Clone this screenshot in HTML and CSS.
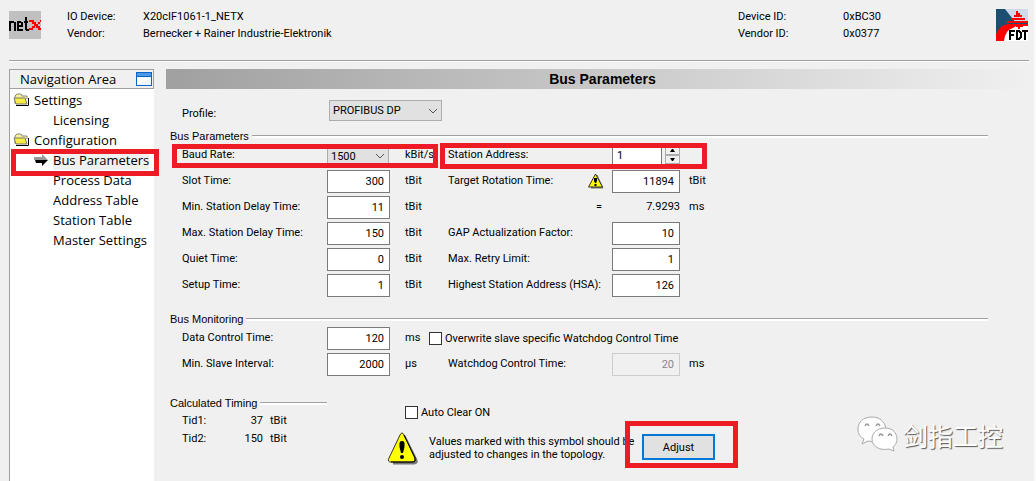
FILE: index.html
```
<!DOCTYPE html>
<html lang="en">
<head>
<meta charset="utf-8">
<title>Bus Parameters</title>
<link rel="stylesheet" href="styles.css">
</head>
<body>
<header class="device">
  <svg class="logo" width="32" height="28" viewBox="0 0 32 28" shape-rendering="crispEdges" role="img" aria-label="netX">
    <rect width="32" height="28" fill="#c0c0c0"/>
    <path d="M1 20V10M1 11H5M6 11V20M14 19H9V10M9 11H12M13 11V15H9M17 6V19M15 11H19M17 19H20" fill="none" stroke="#000" stroke-width="2"/>
    <path d="M20 9H25V11H27V13H29V11H31V9H32V11H31V13H29V15H31V17H32V19H29V17H27V15H26V17H24V19H20V17H23V15H25V13H23V11H20Z" fill="#f00"/>
  </svg>
  <dl class="facts facts-main">
    <dt>IO Device:</dt><dd>X20cIF1061-1_NETX</dd>
    <dt>Vendor:</dt><dd>Bernecker + Rainer Industrie-Elektronik</dd>
  </dl>
  <dl class="facts facts-ids">
    <dt>Device ID:</dt><dd>0xBC30</dd>
    <dt>Vendor ID:</dt><dd>0x0377</dd>
  </dl>
  <svg class="fdt" width="32" height="32" viewBox="0 0 32 32" role="img" aria-label="FDT">
    <rect width="32" height="32" fill="#1b4f72"/>
    <path d="M9 0H32V14H20Z" fill="#d0d8ec"/>
    <path d="M8 32V26L12 20L20 17H32V32Z" fill="#fff"/>
    <path d="M0 32V25Q5 14 14 15L32 15V17H20L17 19Q9 21 8 32Z" fill="#f00"/>
    <path d="M20 2h2v2h2v2h-4zM18 6h8v2h-8zM15 9h14v2H15zM11 12h21v2H11zM20 17h7v1h-3v2h-2v-2h-2z" fill="#f00"/>
    <path d="M14 31V21M13 22H19M14 26H18M21 21V31M20 30H23L25 28V24L23 22H20M26 22H32M29 22V31" fill="none" stroke="#000" stroke-width="2" shape-rendering="crispEdges"/>
  </svg>
</header>
<div class="workspace">
  <nav class="nav">
    <div class="nav-head"><span>Navigation Area</span>
      <svg width="16" height="14" viewBox="0 0 16 14"><rect x=".5" y=".5" width="15" height="13" fill="#eef5fd" stroke="#0a64c8"/><path d="M1 1H15V4H1Z" fill="#4a9ae8"/><path d="M0 4.500H16" stroke="#0a64c8"/><path d="M1 13V6H15Z" fill="#fff"/></svg>
    </div>
    <ul>
      <li class="folder"><svg width="17" height="14" viewBox="0 0 17 14"><path d="M2 11V3L4 1H8L9 3H14V6" fill="#f5ef9b" stroke="#888"/><path d="M1 5H12L14 11H3Z" fill="#f7ec45" stroke="#777"/><path d="M3 12.500H15.500V5" fill="none" stroke="#000"/></svg><a href="#">Settings</a></li>
      <li><a href="#">Licensing</a></li>
      <li class="folder"><svg width="17" height="14" viewBox="0 0 17 14"><path d="M2 11V3L4 1H8L9 3H14V6" fill="#f5ef9b" stroke="#888"/><path d="M1 5H12L14 11H3Z" fill="#f7ec45" stroke="#777"/><path d="M3 12.500H15.500V5" fill="none" stroke="#000"/></svg><a href="#">Configuration</a></li>
      <li class="current"><svg width="14" height="12" viewBox="0 0 14 12"><path d="M0 3H8V0L14 6H0Z" fill="#999"/><path d="M1 6H14L8 12V9H2Z" fill="#000"/></svg><a href="#" aria-current="page">Bus Parameters</a><span class="mark mark-nav"></span></li>
      <li><a href="#">Process Data</a></li>
      <li><a href="#">Address Table</a></li>
      <li><a href="#">Station Table</a></li>
      <li><a href="#">Master Settings</a></li>
    </ul>
  </nav>
  <main class="main">
    <h1>Bus Parameters</h1>
    <div class="profile"><label class="name" for="profile">Profile:</label>
      <span class="combo"><select id="profile"><option>PROFIBUS DP</option></select><svg width="10" height="6" viewBox="0 0 10 6"><path d="M1 1L5 5L9 1" fill="none" stroke="#555"/></svg></span>
    </div>
    <section>
      <h2>Bus Parameters</h2>
      <div class="row">
        <label class="name" for="baud">Baud Rate:</label><span class="combo combo-small"><select id="baud"><option>1500</option></select><svg width="10" height="6" viewBox="0 0 10 6"><path d="M1 1L5 5L9 1" fill="none" stroke="#555"/></svg></span><span class="unit">kBit/s</span>
        <label class="second" for="address">Station Address:</label><input class="value address" id="address" value="1">
        <span class="spin"><button type="button" aria-label="Increase"><svg width="5" height="3" viewBox="0 0 5 3"><path d="M0 3H5L3 0H2Z"/></svg></button><button type="button" aria-label="Decrease"><svg width="5" height="3" viewBox="0 0 5 3"><path d="M0 0H5L3 3H2Z"/></svg></button></span>
        <span class="mark mark-baud"></span><span class="mark mark-station"></span>
      </div>
      <div class="row">
        <label class="name" for="slot">Slot Time:</label><input class="value" id="slot" value="300"><span class="unit">tBit</span>
        <label class="second" for="rotation">Target Rotation Time:<svg class="warn" width="16" height="16" viewBox="0 0 16 16"><path d="M9 2L15 15H3Z" fill="#777" stroke="#777" stroke-linejoin="round"/><path d="M7.500 1L14.500 14H.5Z" fill="#ff0" stroke="#333" stroke-linejoin="round"/><path d="M6 5H9V8L8 10H7L6 8ZM6.500 11H8.500V13H6.500Z"/></svg></label><input class="value wide" id="rotation" value="11894"><span class="tail">tBit</span>
      </div>
      <div class="row">
        <label class="name" for="min-delay">Min. Station Delay Time:</label><input class="value" id="min-delay" value="11"><span class="unit">tBit</span>
        <span class="second equals">=</span><output class="wide result">7.9293</output><span class="tail">ms</span>
      </div>
      <div class="row">
        <label class="name" for="max-delay">Max. Station Delay Time:</label><input class="value" id="max-delay" value="150"><span class="unit">tBit</span>
        <label class="second" for="gap">GAP Actualization Factor:</label><input class="value wide" id="gap" value="10">
      </div>
      <div class="row">
        <label class="name" for="quiet">Quiet Time:</label><input class="value" id="quiet" value="0"><span class="unit">tBit</span>
        <label class="second" for="retry">Max. Retry Limit:</label><input class="value wide" id="retry" value="1">
      </div>
      <div class="row">
        <label class="name" for="setup">Setup Time:</label><input class="value" id="setup" value="1"><span class="unit">tBit</span>
        <label class="second" for="hsa">Highest Station Address (HSA):</label><input class="value wide" id="hsa" value="126">
      </div>
    </section>
    <section class="monitoring">
      <h2>Bus Monitoring</h2>
      <div class="row">
        <label class="name" for="control">Data Control Time:</label><input class="value" id="control" value="120"><span class="unit unit-short">ms</span>
        <label class="check"><input type="checkbox">Overwrite slave specific Watchdog Control Time</label>
      </div>
      <div class="row">
        <label class="name" for="interval">Min. Slave Interval:</label><input class="value" id="interval" value="2000"><span class="unit">µs</span>
        <label class="second" for="watchdog">Watchdog Control Time:</label><input class="value wide" id="watchdog" value="20" disabled><span class="tail">ms</span>
      </div>
    </section>
    <div class="bottom">
      <section class="timing">
        <h2>Calculated Timing</h2>
        <dl><dt>Tid1:</dt><dd>37</dd><dd>tBit</dd><dt>Tid2:</dt><dd>150</dd><dd>tBit</dd></dl>
      </section>
      <div class="actions">
        <label class="check"><input type="checkbox">Auto Clear ON</label>
        <div class="notice">
          <svg width="33" height="33" viewBox="0 0 33 33"><path d="M17 4L29 28Q30 31 27 31H6" fill="#777" stroke="#777" stroke-width="3"/><path d="M13 3Q15 -1 17 3L28 26Q29 30 26 30H4Q0 30 2 26Z" fill="#ff0" stroke="#333"/><path d="M17 3L28 26Q29 30 26 30H4" fill="none" stroke="#000"/><path d="M12.500 11Q12.500 9 15 9T17.500 11V15L16 21H14L12.500 15Z"/><circle cx="15" cy="25" r="2"/></svg>
          <p>Values marked with this symbol should be<br>adjusted to changes in the topology.</p>
          <div class="adjust"><button type="button">Adjust</button></div>
        </div>
      </div>
    </div>
  </main>
</div>
<div class="watermark">
  <svg width="42" height="37" viewBox="0 0 42 37"><g fill="#fff" stroke="#aaa"><path d="M15 1C6 1 1 6 1 13C1 18 3 21 7 23L5 28L11 25C24 28 30 20 29 13C28 5 22 1 15 1Z"/><path d="M28 12C20 12 15 17 15 23C15 30 22 35 32 33L37 35L36 31C43 26 41 12 28 12Z"/></g><path d="M8 10Q10 6 12 10M19 10Q21 6 23 10M22 20Q24 16 26 20M31 20Q33 16 35 20" fill="none" stroke="#999" stroke-width="1.500"/></svg>
  <span lang="zh">剑指工控</span>
</div>
</body>
</html>
```
FILE: styles.css
```
* { box-sizing: border-box; }
body {
  margin: 0;
  min-height: 100vh;
  display: flex;
  flex-direction: column;
  position: relative;
  background: #f0f0f0;
  color: #000;
  font: 11px/17px Roboto, "Noto Sans", sans-serif;
  border-right: 2px solid #fafafa;
}
dl, dd, ul, p, h1, h2 { margin: 0; padding: 0; }
input, select, button { font: inherit; color: inherit; margin: 0; border-radius: 0; }
svg { flex: none; }
a { color: inherit; text-decoration: none; }

.device {
  display: flex;
  align-items: flex-start;
  margin: 0 5px 0 9px;
  padding-top: 8px;
  height: 62px;
  border-bottom: 1px solid #fff;
  box-shadow: inset 0 -1px #a0a0a0;
}
.logo { margin: 3px 26px 0 0; }
.facts { display: grid; white-space: nowrap; }
.facts-main { flex: 1; grid-template-columns: 76px auto; }
.facts-ids { grid-template-columns: 105px 153px; }
.fdt { margin: 1px 1px 0 0; }

.workspace { flex: 1; display: flex; gap: 12px; padding: 7px 5px 0 9px; }
.nav {
  width: 145px;
  flex: none;
  background: #fff;
  border-left: 1px solid #a0a0a0;
  font: 13px/20px "Open Sans", "Noto Sans", sans-serif;
}
.nav-head {
  display: flex;
  justify-content: space-between;
  align-items: center;
  height: 20px;
  padding: 0 1px 0 10px;
  background: #f0f0f0;
  border: 1px solid #a0a0a0;
  border-left: 0;
}
.nav ul { list-style: none; padding-top: 1px; }
.nav li { height: 20px; display: flex; align-items: center; padding-left: 43px; white-space: nowrap; }
.nav .folder { padding-left: 3px; gap: 4px; }
.nav .current { position: relative; padding-left: 24px; gap: 5px; }
.current a { background: #f0f0f0; }
.mark { position: absolute; border: 5px solid #ed1c24; }
.mark-nav { inset: -1px -5px -6px 1px; }

.main { flex: 1; min-width: 0; }
h1 {
  height: 20px;
  padding-left: 10px;
  font: bold 14px/20px "Liberation Sans", sans-serif;
  text-align: center;
  background: linear-gradient(to right, #a0a0a0, #f0f0f0);
}
.profile { display: flex; align-items: flex-start; padding: 11px 0 0 16px; height: 40px; }
.profile .name { width: 147px; padding-top: 5px; }
.combo { position: relative; width: 113px; height: 21px; }
.combo select {
  width: 100%;
  height: 100%;
  appearance: none;
  padding: 0 3px;
  background: #e1e1e1;
  border: 1px solid #adadad;
}
.combo svg { position: absolute; right: 4px; top: 8px; }
.combo-small { width: 62px; margin: 1px 1px 0 0; }
h2 {
  display: flex;
  align-items: center;
  gap: 3px;
  height: 14px;
  margin: 0 41px 0 4px;
  font: 11px/14px "Liberation Sans", sans-serif;
}
h2::after { content: ""; flex: 1; height: 2px; background: #fff; border-top: 1px solid #a0a0a0; }
.row {
  position: relative;
  display: flex;
  height: 26px;
  padding: 1px 0 2px 16px;
  line-height: 22px;
  white-space: nowrap;
}
.name { width: 145px; flex: none; }
.value {
  width: 63px;
  height: 23px;
  flex: none;
  padding: 0 5px;
  text-align: right;
  background: #fff;
  border: 1px solid #7a7a7a;
}
.value:disabled { background: #f0f0f0; border: 1px solid #ccc; color: #888; }
.wide { width: 68px; }
.unit { width: 43px; margin-left: 15px; }
.unit-short { width: 24px; }
.second { width: 164px; flex: none; }
label.second { display: flex; justify-content: space-between; }
.warn { margin: 3px 8px 0 0; }
.equals { padding-left: 148px; }
.result { text-align: right; }
.tail { margin-left: 9px; }
.address { width: 50px; text-align: left; padding: 0 4px; }
.spin { display: flex; flex-direction: column; width: 15px; margin: 2px 0 0 3px; }
.spin button {
  height: 9px;
  padding: 0;
  display: flex;
  justify-content: center;
  align-items: center;
  background: #f0f0f0;
  border: 1px solid #acacac;
}
.mark-baud { left: 6px; top: 1px; width: 266px; height: 24px; }
.mark-station { left: 274px; top: 0; width: 267px; height: 26px; }

.monitoring { padding-top: 13px; }
.check { display: flex; align-items: center; gap: 3px; }
.check input {
  width: 13px;
  height: 13px;
  appearance: none;
  background: #fff;
  border: 1px solid #333;
}
.bottom { display: flex; gap: 60px; padding-top: 18px; }
.timing { width: 161px; }
.timing h2 { margin-right: 0; }
.timing dl {
  display: grid;
  grid-template-columns: 40px 41px auto;
  line-height: 18px;
  padding: 2px 0 0 16px;
}
.timing dd { text-align: right; }
.timing dd + dd { text-align: left; padding-left: 7px; }
.actions { padding-top: 8px; }
.actions .check { padding-left: 18px; }
.notice { display: flex; }
.notice svg { margin: 11px 9px 0 0; }
.notice p { margin-top: 14px; width: 196px; line-height: 13px; white-space: nowrap; }
.adjust { position: relative; padding: 8px 12px 2px; border: 5px solid #ed1c24; width: 113px; height: 47px; }
.adjust button {
  display: block;
  width: 73px;
  height: 26px;
  background: #e1e1e1;
  border: 2px solid #0078d7;
}
.watermark {
  position: absolute;
  right: 31px;
  bottom: 28px;
  display: flex;
  align-items: center;
  gap: 4px;
  font: 25px/36px "Noto Sans CJK SC", sans-serif;
  color: #fff;
  text-shadow: 1px 1px 1px #555;
}
```
